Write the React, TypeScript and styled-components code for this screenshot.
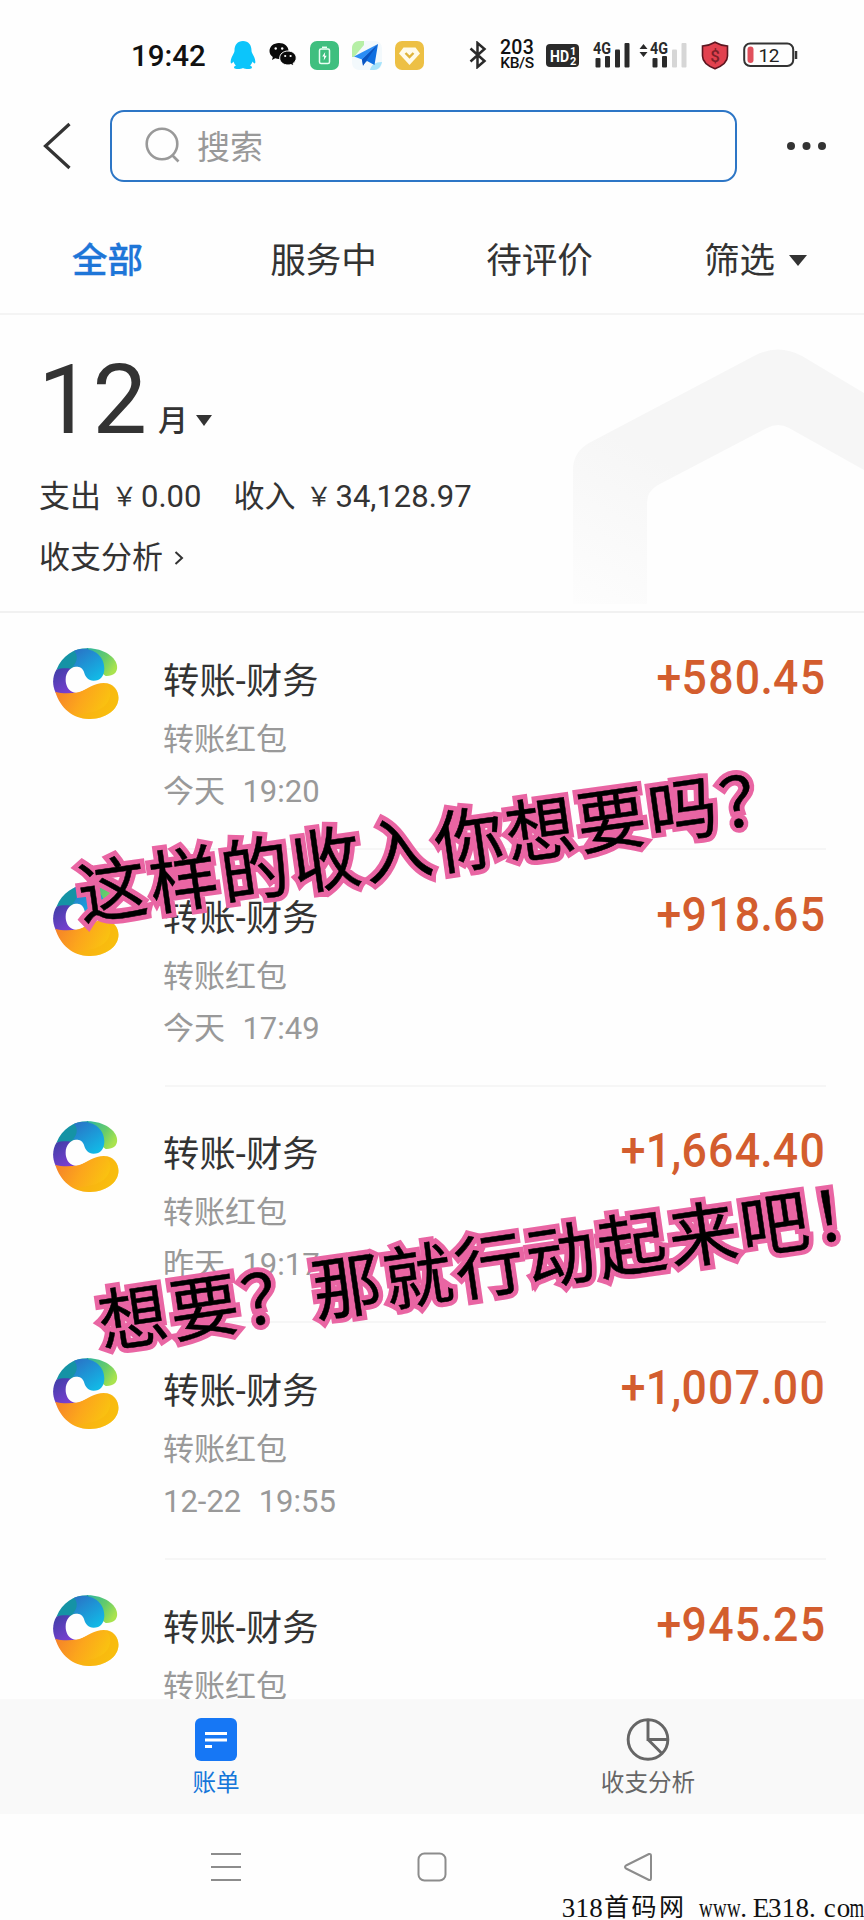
import React from 'react';
import styled, { createGlobalStyle } from 'styled-components';

const GlobalStyle = createGlobalStyle`
  * { box-sizing: border-box; }
  body {
    margin: 0;
    background: #fefefe;
    color: #333;
    font-family: Roboto, "Noto Sans CJK SC", sans-serif;
  }
`;

const Phone = styled.div`
  position: relative;
  width: 864px;
  height: 1920px;
  display: flex;
  flex-direction: column;
  overflow: hidden;
  background: #fefefe;
`;

/* ---------- status bar ---------- */

const StatusBar = styled.header`
  height: 96px;
  padding: 14px 50px 0 131px;
  display: flex;
  align-items: center;
  flex-shrink: 0;
  color: #111;
`;

const Clock = styled.time`
  width: 99px;
  padding-top: 1px;
  font-size: 29.5px;
  font-weight: 500;
  line-height: 30px;
`;

const NotificationIcons = styled.div`
  display: flex;
  align-items: center;
  gap: 13px;
  width: 239px;
`;

const SystemIcons = styled.div`
  display: flex;
  align-items: center;
`;

const NetSpeed = styled.div`
  width: 36px;
  margin: 0 11px 0 12px;
  text-align: center;
  font-weight: 500;
  font-size: 19.5px;
  line-height: 16px;
  letter-spacing: 0.3px;
  white-space: nowrap;
`;

const SpeedUnit = styled.div`
  font-size: 15.5px;
  line-height: 14px;
  letter-spacing: -0.4px;
`;

/* ---------- search ---------- */

const SearchRow = styled.div`
  height: 100px;
  display: flex;
  align-items: center;
  flex-shrink: 0;
  padding-left: 42px;
`;

const SearchBox = styled.div`
  width: 627px;
  height: 72px;
  margin: 0 49px 0 38px;
  padding: 0 0 2px 33px;
  display: flex;
  align-items: center;
  gap: 16px;
  border: 2.5px solid #2d76c6;
  border-radius: 14px;
  font-size: 33px;
  color: #999;
  background: #fefefe;
`;

/* ---------- tabs ---------- */

const Tabs = styled.nav`
  height: 119px;
  display: grid;
  grid-template-columns: repeat(4, 216px);
  flex-shrink: 0;
  border-bottom: 2px solid #f4f4f4;
`;

const Tab = styled.div<{ $active?: boolean }>`
  display: flex;
  align-items: center;
  justify-content: center;
  gap: 14px;
  padding: 12px 1px 0 0;
  font-size: 35.6px;
  line-height: 44px;
  height: 117px;
  color: ${(p) => (p.$active ? '#1e76d8' : '#333')};
  -webkit-text-stroke: ${(p) => (p.$active ? '0.3px #1e76d8' : '0')};
  font-weight: ${(p) => (p.$active ? 500 : 400)};
`;

const Triangle = styled.i<{ $w: number }>`
  width: 0;
  height: 0;
  border: ${(p) => p.$w / 2}px solid transparent;
  border-top: 11px solid #333;
  border-bottom: 0;
`;

/* ---------- monthly summary ---------- */

const Summary = styled.section`
  position: relative;
  height: 298px;
  padding: 37px 0 0 39px;
  flex-shrink: 0;
  border-bottom: 2px solid #f1f1f1;
`;

const Watermark = styled.svg`
  position: absolute;
  right: 0;
  top: 5px;
`;

const Month = styled.div`
  display: flex;
  align-items: flex-start;
  height: 114px;
`;

const MonthNumber = styled.span`
  margin-left: -1px;
  font-size: 97px;
  line-height: 96px;
`;

const MonthUnit = styled.span`
  margin: 49px 8px 0 11px;
  font-size: 30px;
  line-height: 40px;
  font-weight: 500;
`;

const MonthArrow = styled.span`
  padding-top: 63px;
  display: flex;
`;

const SummaryLine = styled.div`
  display: flex;
  align-items: center;
  height: 61px;
  font-size: 31px;
  line-height: 40px;
`;

const Sum = styled.span<{ $gap?: number }>`
  display: flex;
  margin: 0 ${(p) => p.$gap || 0}px 0 7px;
`;

const Yen = styled.span`
  width: 33px;
  text-align: center;
  font-size: 26px;
`;

/* ---------- bill list ---------- */

const Bills = styled.main`
  height: 1086px;
  overflow: hidden;
  flex-shrink: 0;
`;

const Bill = styled.article`
  height: 236.7px;
  padding: 35px 38px 0 53px;
  display: flex;
  align-items: flex-start;
`;

const BillBody = styled.div`
  flex: 1;
  height: 202px;
  margin-left: 46px;
  display: flex;
  justify-content: space-between;
  border-bottom: 2px solid #f6f6f6;
`;

const Title = styled.div`
  margin: 12px 0 0 -2px;
  font-size: 36.2px;
  line-height: 44px;
  letter-spacing: 0.2px;
`;

const Detail = styled.div<{ $top: number }>`
  margin: ${(p) => p.$top}px 0 0 -2px;
  font-size: 31px;
  line-height: 40px;
  color: #999;
  white-space: pre;
  word-spacing: 1px;
`;

const Amount = styled.div`
  padding-top: 4px;
  margin-right: 0;
  font-size: 48.5px;
  line-height: 52px;
  font-weight: 500;
  letter-spacing: 1.4px;
  color: #d35d2e;
  transform: scaleX(0.92);
  transform-origin: right center;
`;

const Mark = styled.span`
  margin: 0 -1.2px;
`;

/* ---------- bottom bars ---------- */

const BottomNav = styled.nav`
  height: 115px;
  display: grid;
  grid-template-columns: 1fr 1fr;
  flex-shrink: 0;
  background: #f9f9f9;
`;

const NavItem = styled.div<{ $active?: boolean }>`
  display: flex;
  flex-direction: column;
  align-items: center;
  padding-top: 19px;
  gap: 5px;
  font-size: 23.6px;
  line-height: 34px;
  color: ${(p) => (p.$active ? '#1677d9' : '#666')};
`;

const KeyBar = styled.footer`
  flex: 1;
  padding: 36px 211px 0;
  display: flex;
  justify-content: space-between;
  align-items: flex-start;
`;

/* ---------- overlays ---------- */

const Caption = styled.div<{ $x: number; $y: number; $deg: number; $text: string }>`
  position: absolute;
  left: ${(p) => p.$x}px;
  top: ${(p) => p.$y}px;
  transform: translate(-50%, -50%) rotate(${(p) => p.$deg}deg);
  font-family: "Noto Sans CJK SC", sans-serif;
  font-size: 69px;
  line-height: 80px;
  letter-spacing: 3px;
  white-space: nowrap;
  color: #000;
  -webkit-text-stroke: 0.5px #000;

  &::before {
    content: "${(p) => p.$text}";
    position: absolute;
    left: 0;
    top: 0;
    z-index: -1;
    color: #f062a6;
    -webkit-text-stroke: 10px #e965a3;
    paint-order: stroke fill;
    stroke-linejoin: round;
  }
`;

const SiteMark = styled.div`
  position: absolute;
  right: 0;
  bottom: -2px;
  height: 28px;
  display: flex;
  font-family: "Liberation Serif", "Noto Sans CJK SC", serif;
  font-size: 27px;
  line-height: 28px;
  color: #111;
`;

const Cell = styled.span<{ $cjk: boolean; $squeeze: boolean; $dot: boolean }>`
  width: ${(p) => (p.$cjk ? 27.5 : 13.75)}px;
  display: flex;
  justify-content: ${(p) => (p.$dot ? 'flex-start' : 'center')};
  font-size: ${(p) => (p.$cjk ? 25 : 27)}px;
  transform: scaleX(${(p) => (p.$squeeze ? 0.7 : 1)});
`;

/* ---------- drawings ---------- */

const QQ = () => (
  <svg width="26" height="30" viewBox="0 0 26 30">
    <path fill="#0cc5fb" d="M13 1C7.500 1 4.500 5 4.500 10.500c0 1.500-.6 2.500-1.500 4.200C1.200 17.800.3 21 .8 23c.5 1.200 1.800-.2 2.700-1.500.5 1.800 1.300 3 2.500 4-1.800.7-2.300 1.600-1.800 2.500.8 1.300 6.600 1.200 8.800 0 2.200 1.200 8 1.300 8.800 0 .5-.9 0-1.800-1.800-2.500 1.200-1 2-2.200 2.500-4 .9 1.300 2.200 2.700 2.700 1.500.5-2-.4-5.200-2.200-8.300-.9-1.700-1.500-2.700-1.500-4.200C21.500 5 18.500 1 13 1z" />
  </svg>
);

const WeChat = () => (
  <svg width="28" height="24" viewBox="0 0 28 24">
    <path fill="#0a0a0a" d="M10 0C4.500 0 .5 3.600.5 8c0 2.500 1.300 4.600 3.300 6.100L3 17l3.200-1.700c1.200.4 2.400.6 3.800.6 5.500 0 9.500-3.600 9.500-8S15.500 0 10 0z" />
    <path fill="#0a0a0a" stroke="#fefefe" strokeWidth="1" d="M19 8c-4.700 0-8.300 3-8.300 7s3.600 7 8.300 7c1 0 2-.1 3-.4l2.700 1.500-.7-2.600c2-1.300 3.200-3.300 3.200-5.500 0-4-3.500-7-8.200-7z" />
    <g fill="#fefefe"><circle cx="6.700" cy="5.500" r="1.200" /><circle cx="13.200" cy="5.500" r="1.200" /><circle cx="16.200" cy="13" r="1.100" /><circle cx="21.600" cy="13" r="1.100" /></g>
  </svg>
);

const PowerApp = () => (
  <svg width="29" height="29" viewBox="0 0 29 29">
    <rect width="29" height="29" rx="7" fill="#3fbf7f" />
    <rect x="9.500" y="8" width="10" height="14.500" rx="1.500" fill="none" stroke="#e9fff3" strokeWidth="1.500" />
    <path d="M12 6.300h5" stroke="#e9fff3" strokeWidth="1.500" />
    <path d="M15.200 11l-3 4.500h2l-.5 4 3-4.800h-2z" fill="#fff" />
  </svg>
);

const MapApp = () => (
  <svg width="30" height="29" viewBox="0 0 30 29">
    <rect width="30" height="29" rx="7" fill="#f3f9fc" />
    <path d="M7 0h5v4L2 16H0V7c0-4 3-7 7-7z" fill="#b6efa6" />
    <path d="M18 29c1-5 5-8 12-8-1 5-4 8-8 8z" fill="#a6e3fb" />
    <path d="M26 3L2 15.500l8 3z" fill="#2c8df5" />
    <path d="M26 3l-3.500 21-7.500-4-4 4-1-5.500z" fill="#0f6fe0" />
    <path d="M26 3L10 18.500l1 6.500 3-5z" fill="#0a54c0" />
  </svg>
);

const GemApp = () => (
  <svg width="29" height="29" viewBox="0 0 29 29">
    <rect width="29" height="29" rx="7" fill="#edc044" />
    <path d="M8.500 6.500h12l4.500 6L14.500 24 4 12.500z" fill="#fffbea" />
    <path d="M10.500 12l4 4 4-4" fill="none" stroke="#dfb43c" strokeWidth="2.400" />
  </svg>
);

const Bluetooth = () => (
  <svg width="18" height="28" viewBox="0 0 18 28" fill="none" stroke="#2a2a2a" strokeWidth="2.500">
    <path d="M1.500 7.500L15.500 20 8.500 26V2l7 6L1.500 20.500" />
  </svg>
);

const HDBadge = () => (
  <svg width="33" height="23" viewBox="0 0 33 23" fontFamily="Roboto" fontWeight="700" fill="#fff">
    <rect width="33" height="23" rx="4" fill="#2a2a2a" />
    <text x="4" y="17.500" fontSize="17" textLength="19" lengthAdjust="spacingAndGlyphs">HD</text>
    <text x="24" y="11" fontSize="11">1</text>
    <text x="24" y="20.500" fontSize="11">2</text>
  </svg>
);

const SignalSvg = styled.svg`
  overflow: visible;
`;

const Signal = ({ weak }: { weak?: boolean }) => (
  <SignalSvg width="38" height="28" viewBox="0 0 38 28" fill="#2a2a2a">
    <text x="0" y="13" fontFamily="Roboto" fontWeight="700" fontSize="16" textLength="18" lengthAdjust="spacingAndGlyphs">4G</text>
    <rect x="2.500" y="17" width="5" height="9.500" rx="1" />
    <rect x="12" y="15" width="5" height="11.500" rx="1" />
    <g fill={weak ? '#d6d6d6' : '#2a2a2a'}>
      <rect x="22" y="8.500" width="5" height="18" rx="1" />
      <rect x="31.500" y="2" width="5" height="24.500" rx="1" />
    </g>
  </SignalSvg>
);

const DataArrows = styled.svg`
  margin: 0 2px 9px 8px;
`;

const Shield = styled.svg`
  margin: 0 14px 0 13px;
`;

const SignalGroup = styled.div`
  display: flex;
  align-items: center;
  margin-left: 14px;
`;

const Battery = () => (
  <svg width="55" height="26" viewBox="0 0 55 26">
    <rect x="1.200" y="1.500" width="49" height="22.500" rx="6" fill="none" stroke="#333" strokeWidth="2" />
    <path d="M53 9v8" stroke="#333" strokeWidth="2.500" />
    <rect x="4.500" y="4.500" width="6" height="16.500" rx="3" fill="#e0505c" />
    <text x="15.500" y="19.500" fontFamily="Roboto" fontSize="19" textLength="21" fill="#222">12</text>
  </svg>
);

const LogoSvg = styled.svg`
  flex-shrink: 0;
`;

const Logo = ({ id }: { id: string }) => (
  <LogoSvg width="66" height="71" viewBox="0 0 195 211">
    <defs>
      <linearGradient id={`${id}o`} x1="0" y1="0" x2="1" y2="0.300">
        <stop offset="0" stopColor="#f47b2c" /><stop offset=".5" stopColor="#fca61c" /><stop offset="1" stopColor="#f9c80e" />
      </linearGradient>
      <linearGradient id={`${id}b`} x1="0" y1="0" x2="0.700" y2="1">
        <stop offset="0" stopColor="#2b6fc4" /><stop offset="1" stopColor="#12b9e6" />
      </linearGradient>
      <linearGradient id={`${id}g`} x1="0" y1="0" x2="1" y2="0.600">
        <stop offset="0" stopColor="#2cb4a0" /><stop offset=".6" stopColor="#66cc6a" /><stop offset="1" stopColor="#a9e34e" />
      </linearGradient>
      <linearGradient id={`${id}p`} x1="0" y1="0" x2="0.600" y2="1">
        <stop offset="0" stopColor="#3c3fa5" /><stop offset="1" stopColor="#7a3fd0" />
      </linearGradient>
    </defs>
    <path fill={`url(#${id}g)`} d="M100 1C150 0 188 28 190 56c1 18-12 28-34 27L110 50z" />
    <path fill="#1593a5" d="M10 64C28 22 62 0 104 1l10 60-50 20C40 72 24 64 10 64z" />
    <path fill={`url(#${id}p)`} d="M10 64c14-5 40-6 57 2v66c-20 8-46 6-60 0C-4 108-2 84 10 64z" />
    <path fill={`url(#${id}o)`} d="M6 130c22 6 46 6 70 0 28-8 46-26 74-26 26 0 44 20 44 44 0 36-38 62-84 63C62 212 22 182 6 130z" />
    <path fill="#f7b50f" opacity=".55" d="M60 196c50 4 108-14 110-60 0-12-4-22-12-31 22 2 36 22 36 43 0 36-38 62-84 63-18 0-36-5-50-15z" />
    <path fill="#fefefe" d="M74 54c24 0 38 16 38 38 0 12-6 24-16 30-12 8-24 12-34 10C46 128 37 112 37 94c0-24 16-40 37-40z" />
    <path fill={`url(#${id}b)`} d="M62 8C100-6 150 10 152 60c0 24-12 37-32 37-16 0-24-10-28-24-4-14-16-20-34-17C70 42 76 25 62 8z" />
  </LogoSvg>
);

/* ---------- data ---------- */

const bills = [
  { time: '今天  19:20', amount: '+580.45' },
  { time: '今天  17:49', amount: '+918.65' },
  { time: '昨天  19:17', amount: '+1,664.40' },
  { time: '12-22  19:55', amount: '+1,007.00' },
  { time: '', amount: '+945.25' },
];

const captions = [
  { text: '这样的收入你想要吗？', x: 434, y: 840, deg: -8 },
  { text: '想要？那就行动起来吧！', x: 490, y: 1261, deg: -8.3 },
];

export default function App() {
  return (
    <Phone lang="zh-CN">
      <GlobalStyle />
      <StatusBar>
        <Clock>19:42</Clock>
        <NotificationIcons><QQ /><WeChat /><PowerApp /><MapApp /><GemApp /></NotificationIcons>
        <SystemIcons>
          <Bluetooth />
          <NetSpeed>203<SpeedUnit>KB/S</SpeedUnit></NetSpeed>
          <HDBadge />
          <SignalGroup>
            <Signal />
            <DataArrows width="9" height="13" viewBox="0 0 8 13"><path d="M0 5l4-5 4 5zM0 8l4 5 4-5z" fill="#2a2a2a" /></DataArrows>
            <Signal weak />
          </SignalGroup>
          <Shield width="28" height="29" viewBox="0 0 28 29">
            <path d="M14 1.200C17 3 21.500 4.500 26.500 5v10c0 6-5.500 10-12.500 12.800C7 25 1.500 21 1.500 15V5C6.500 4.500 11 3 14 1.200z" fill="#e2414f" stroke="#5b1620" strokeWidth="1.600" />
            <text x="14" y="20.500" textAnchor="middle" fontSize="17" fontWeight="500" fontFamily="Roboto" fill="#7d2028">$</text>
          </Shield>
          <Battery />
        </SystemIcons>
      </StatusBar>

      <SearchRow>
        <svg width="30" height="48" viewBox="0 0 30 48" fill="none" stroke="#333" strokeWidth="3.200"><path d="M27.500 2L3.500 24l24 22" /></svg>
        <SearchBox>
          <svg width="36" height="36" viewBox="0 0 36 36" fill="none" stroke="#999" strokeWidth="2.600"><circle cx="17" cy="17" r="15.300" /><path d="M27.500 28.500l6 6" /></svg>
          搜索
        </SearchBox>
        <svg width="42" height="10" viewBox="0 0 42 10" fill="#333"><circle cx="5" cy="5" r="4" /><circle cx="20.500" cy="5" r="4" /><circle cx="36" cy="5" r="4" /></svg>
      </SearchRow>

      <Tabs>
        <Tab $active>全部</Tab>
        <Tab>服务中</Tab>
        <Tab>待评价</Tab>
        <Tab>筛选<Triangle $w={18} /></Tab>
      </Tabs>

      <Summary>
        <Watermark width="300" height="290" viewBox="0 0 300 290">
          <defs>
            <linearGradient id="fade" x1="0.600" y1="0" x2="0" y2="1">
              <stop offset=".45" stopColor="#f6f6f6" /><stop offset="1" stopColor="#fdfdfd" />
            </linearGradient>
          </defs>
          <path fill="url(#fade)" d="M9 284V150q0-18 16-27L190 36q24-13 48 0L300 73v77L225 108q-11-6-22 0L94 165q-11 6-11 18V284z" />
        </Watermark>
        <Month>
          <MonthNumber>12</MonthNumber>
          <MonthUnit>月</MonthUnit>
          <MonthArrow><Triangle $w={17} /></MonthArrow>
        </Month>
        <SummaryLine>
          支出<Sum $gap={32}><Yen>￥</Yen>0.00</Sum>
          收入<Sum><Yen>￥</Yen>34,128.97</Sum>
        </SummaryLine>
        <SummaryLine>
          收支分析
          <svg width="34" height="16" viewBox="0 0 34 16" fill="none" stroke="#333" strokeWidth="2"><path d="M12.500 2l6.500 6-6.500 6" /></svg>
        </SummaryLine>
      </Summary>

      <Bills>
        {bills.map((b, i) => (
          <Bill key={i}>
            <Logo id={`l${i}`} />
            <BillBody>
              <div>
                <Title>转账-财务</Title>
                <Detail $top={16}>转账红包</Detail>
                {b.time && <Detail $top={12}>{b.time}</Detail>}
              </div>
              <Amount>
                {b.amount.split('').map((c, k) => (/\d/.test(c) ? c : <Mark key={k}>{c}</Mark>))}
              </Amount>
            </BillBody>
          </Bill>
        ))}
      </Bills>

      <BottomNav>
        <NavItem $active>
          <svg width="42" height="43" viewBox="0 0 42 43">
            <rect width="42" height="43" rx="6" fill="#1677f5" />
            <path d="M10 15.500h22M10 22h22M10 28.500h7" stroke="#fff" strokeWidth="3.200" />
          </svg>
          账单
        </NavItem>
        <NavItem>
          <svg width="44" height="43" viewBox="0 0 44 44" fill="none" stroke="#666" strokeWidth="3"><circle cx="22" cy="22" r="20.300" /><path d="M22 2v20h20M22 22l14 14" /></svg>
          收支分析
        </NavItem>
      </BottomNav>

      <KeyBar>
        <svg width="30" height="34" viewBox="0 0 30 34" stroke="#8c8c8c" strokeWidth="2"><path d="M0 4h30M0 17h30M0 30h30" /></svg>
        <svg width="30" height="34" viewBox="0 0 30 34" fill="none" stroke="#8c8c8c" strokeWidth="2"><rect x="1.500" y="3.500" width="27" height="27" rx="6" /></svg>
        <svg width="30" height="34" viewBox="0 0 30 34" fill="none" stroke="#8c8c8c" strokeWidth="2" strokeLinejoin="round"><path d="M26 4L3 15.500q-2 1.500 0 3L26 30q2 .5 2-2V6q0-2.500-2-2z" /></svg>
      </KeyBar>

      {captions.map((c) => (
        <Caption key={c.text} $text={c.text} $x={c.x} $y={c.y} $deg={c.deg}>{c.text}</Caption>
      ))}

      <SiteMark>
        {'318首码网 www.E318.com'.split('').map((c, i) => (
          <Cell key={i} $cjk={c > '\u2000'} $squeeze={c === 'w' || c === 'm'} $dot={c === '.'}>{c}</Cell>
        ))}
      </SiteMark>
    </Phone>
  );
}
